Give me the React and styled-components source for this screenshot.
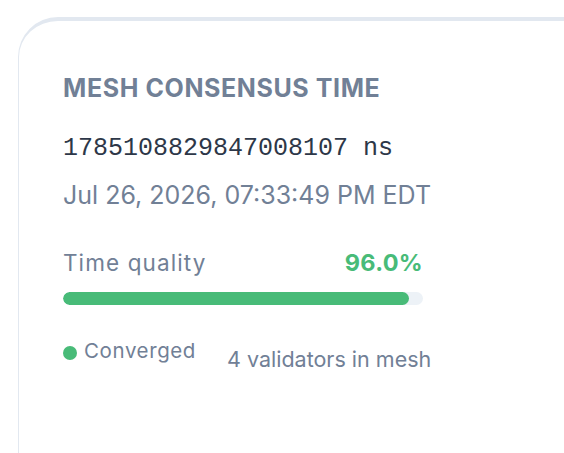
import React from 'react';
import styled, { createGlobalStyle } from 'styled-components';

const Global = createGlobalStyle`
  html, body {
    margin: 0;
    padding: 0;
    background: #ffffff;
    overflow: hidden;
  }
  body {
    font-family: Inter, "Noto Sans", sans-serif;
  }
`;

const Page = styled.div`
  padding: 17px 0 0 18px;
  width: 564px;
  height: 453px;
  box-sizing: border-box;
  overflow: hidden;
`;

const Card = styled.section`
  width: 640px;
  height: 520px;
  box-sizing: border-box;
  background: #ffffff;
  border: 1px solid #e2e8f0;
  border-top: 4px solid #e2e8f0;
  border-radius: 40px;
  padding: 52px 44px;
`;

const Content = styled.div`
  width: 360px;
  display: flex;
  flex-direction: column;
  white-space: nowrap;
`;

const Title = styled.h2`
  margin: 0;
  font-size: 25px;
  font-weight: 700;
  letter-spacing: 0.6px;
  color: #718096;
  text-transform: uppercase;
  line-height: 30px;
`;

const Nanos = styled.div`
  margin-top: 31px;
  font-family: "Liberation Mono", monospace;
  font-size: 25px;
  line-height: 30px;
  color: #2d3748;
`;

const DateLine = styled.div`
  margin-top: 16px;
  font-size: 25px;
  line-height: 30px;
  color: #718096;
`;

const QualityRow = styled.div`
  margin-top: 39px;
  display: flex;
  justify-content: space-between;
  align-items: baseline;
  line-height: 28px;
`;

const Label = styled.span`
  font-size: 22.5px;
  letter-spacing: 1.1px;
  color: #718096;
`;

const Value = styled.span`
  font-size: 23.5px;
  letter-spacing: 0.3px;
  color: #48bb78;
  font-weight: 700;
`;

const Track = styled.div`
  margin-top: 15px;
  height: 13px;
  border-radius: 7px;
  background: #edf2f7;
  overflow: hidden;
`;

const Fill = styled.div`
  height: 100%;
  border-radius: 7px;
  background: #48bb78;
`;

const Footer = styled.div`
  margin-top: 34px;
  display: flex;
  align-items: flex-start;
  gap: 31px;
  line-height: 24px;
  color: #718096;
`;

const Status = styled.span`
  display: flex;
  align-items: center;
  gap: 7px;
  font-size: 20.5px;
  letter-spacing: 0.6px;
`;

const Dot = styled.span`
  width: 14px;
  height: 14px;
  margin-top: 3px;
  border-radius: 50%;
  background: ${(p) => p.color};
`;

const Meta = styled.span`
  margin-top: 8px;
  font-size: 21.5px;
`;

export default function App() {
  const quality = 96.0;
  return (
    <Page>
      <Global />
      <Card>
        <Content>
          <Title>Mesh Consensus Time</Title>
          <Nanos>1785108829847008107 ns</Nanos>
          <DateLine>Jul 26, 2026, 07:33:49 PM EDT</DateLine>
          <QualityRow>
            <Label>Time quality</Label>
            <Value>{quality.toFixed(1)}%</Value>
          </QualityRow>
          <Track>
            <Fill style={{ width: `${quality}%` }} />
          </Track>
          <Footer>
            <Status>
              <Dot color="#48bb78" />
              Converged
            </Status>
            <Meta>4 validators in mesh</Meta>
          </Footer>
        </Content>
      </Card>
    </Page>
  );
}
